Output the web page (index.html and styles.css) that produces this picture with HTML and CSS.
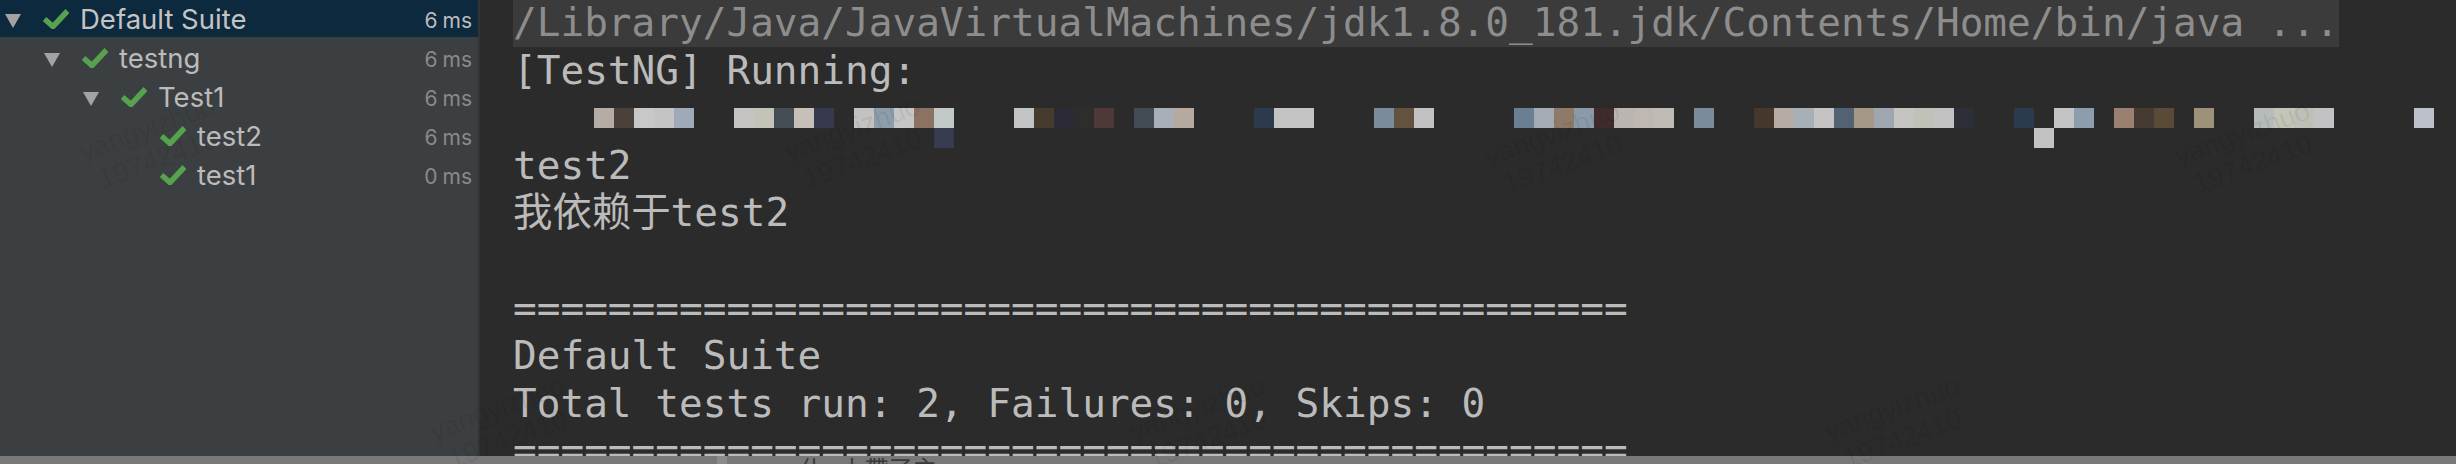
FILE: index.html
```html
<!DOCTYPE html>
<html lang="zh-CN">
<head>
    <meta charset="UTF-8">
    <title>TestNG Run</title>
    <link rel="stylesheet" href="styles.css">
</head>
<body>
    <div class="window">
        <div class="main">
            <aside class="tree">
                <div class="tree-list">
                    <div class="node selected lvl0">
                        <span class="toggle"><svg viewBox="0 0 16 14"><polygon points="0,0 16,0 8,14"/></svg></span>
                        <span class="check"><svg viewBox="0 0 26 20"><path d="M1.5 10 L10 17.5 L24.5 2"/></svg></span>
                        <span class="name">Default Suite</span>
                        <span class="time">6 ms</span>
                    </div>
                    <div class="node lvl1">
                        <span class="toggle"><svg viewBox="0 0 16 14"><polygon points="0,0 16,0 8,14"/></svg></span>
                        <span class="check"><svg viewBox="0 0 26 20"><path d="M1.5 10 L10 17.5 L24.5 2"/></svg></span>
                        <span class="name">testng</span>
                        <span class="time">6 ms</span>
                    </div>
                    <div class="node lvl2">
                        <span class="toggle"><svg viewBox="0 0 16 14"><polygon points="0,0 16,0 8,14"/></svg></span>
                        <span class="check"><svg viewBox="0 0 26 20"><path d="M1.5 10 L10 17.5 L24.5 2"/></svg></span>
                        <span class="name">Test1</span>
                        <span class="time">6 ms</span>
                    </div>
                    <div class="node lvl3">
                        <span class="toggle"></span>
                        <span class="check"><svg viewBox="0 0 26 20"><path d="M1.5 10 L10 17.5 L24.5 2"/></svg></span>
                        <span class="name">test2</span>
                        <span class="time">6 ms</span>
                    </div>
                    <div class="node lvl3">
                        <span class="toggle"></span>
                        <span class="check"><svg viewBox="0 0 26 20"><path d="M1.5 10 L10 17.5 L24.5 2"/></svg></span>
                        <span class="name">test1</span>
                        <span class="time">0 ms</span>
                    </div>
                </div>
            </aside>

            <section class="console">
                <div class="lines">
                    <div class="line"><span class="cmd">/Library/Java/JavaVirtualMachines/jdk1.8.0_181.jdk/Contents/Home/bin/java ...</span></div>
                    <div class="line">[TestNG] Running:</div>
                    <div class="line"><div class="mosaic" id="mosaic"></div></div>
                    <div class="line">test2</div>
                    <div class="line">我依赖于test2</div>
                    <div class="line"></div>
                    <div class="line">===============================================</div>
                    <div class="line">Default Suite</div>
                    <div class="line">Total tests run: 2, Failures: 0, Skips: 0</div>
                    <div class="line">===============================================</div>
                </div>
            </section>
        </div>

        <div class="statusbar">
            <span class="sb-grip"></span>
            <span class="sb-text">仆 <i class="sb-dot"></i> 上帶了主</span>
        </div>

        <div class="watermark wm1">yangyizhuo<br>&nbsp;19742410</div>
        <div class="watermark wm2">yangyizhuo<br>&nbsp;19742410</div>
        <div class="watermark wm3">yangyizhuo<br>&nbsp;19742410</div>
        <div class="watermark wm4">yangyizhuo<br>&nbsp;19742410</div>
        <div class="watermark wm5">yangyizhuo<br>&nbsp;19742410</div>
        <div class="watermark wm6">yangyizhuo<br>&nbsp;19742410</div>
        <div class="watermark wm7">yangyizhuo<br>&nbsp;19742410</div>
    </div>

    <script>
        // blurred-out path, one colour per 20px cell ("" = empty)
        const linha1 = [
            "#b5aca5", "#4a413b", "#c8c8c8", "#c4c4c4", "#9eaab8", "", "",
            "#c5c4c0", "#c3c3b8", "#444c54", "#c6c0b8", "#373a4f", "",
            "#c2c2c2", "#8d9daa", "#c6c6c6", "#8c7262", "#c2cac8", "", "", "",
            "#c1c3c5", "#473b2e", "#2b2a35", "#2d2d2e", "#4e3838", "",
            "#434c54", "#a8afb7", "#b6aaa0", "", "", "",
            "#2d3a4d", "#c4c4c4", "#c4c4c4", "", "", "",
            "#7a8c9c", "#62523f", "#c2c2c2", "", "", "", "",
            "#6a7f93", "#a5abb2", "#8e7a68", "#8a9aa8", "#3f2b2c", "#bab5b0", "#bfb7b1", "#c0bcb5", "",
            "#7a8c9b", "", "",
            "#45372b", "#b5aca3", "#a6b0b6", "#c4c4c4", "#536272", "#a69886", "#9ea6b0", "#c4c4c2", "#c0c1b8", "#c2c2c2", "#2c2f38", "", "",
            "#2c3a50", "", "#c4c4c4", "#8c9dad", "",
            "#9a8070", "#463b33", "#5c4a38", "",
            "#9d917a", "", "",
            "#b7bcbb", "#c5c4b8", "#bec0b8", "#c2c2c4", "", "", "", "",
            "#bcc0c8"
        ];
        const linha2 = { 17: "#363b50", 72: "#c2c2c2" };

        const mosaic = document.getElementById("mosaic");
        linha1.forEach(function (cor) {
            const cell = document.createElement("span");
            cell.className = "cell";
            if (cor) cell.style.background = cor;
            mosaic.appendChild(cell);
        });
        Object.keys(linha2).forEach(function (col) {
            const cell = document.createElement("span");
            cell.className = "cell";
            cell.style.gridColumn = (Number(col) + 1);
            cell.style.gridRow = 2;
            cell.style.background = linha2[col];
            mosaic.appendChild(cell);
        });
    </script>
</body>
</html>
```

FILE: styles.css
```css
body {
    margin: 0;
    padding: 0;
    background: #2b2b2b;
    font-family: Inter, "Liberation Sans", sans-serif;
    overflow: hidden;
}

.window {
    position: relative;
    width: 2456px;
    height: 464px;
    display: flex;
    flex-direction: column;
    overflow: hidden;
}

.main {
    display: flex;
    height: 456px;
    overflow: hidden;
}

/* test tree on the left */
.tree {
    width: 478px;
    flex: none;
    background: #3c3f41;
    border-right: 2px solid #313335;
}

.tree-list {
    margin-top: -2px;
}

.node {
    display: flex;
    align-items: center;
    height: 39px;
    padding-right: 6px;
}

.node.selected {
    background: #0d293e;
}

.lvl0 { padding-left: 5px; }
.lvl1 { padding-left: 44px; }
.lvl2 { padding-left: 83px; }
.lvl3 { padding-left: 122px; }

.toggle {
    width: 38px;
    flex: none;
    display: flex;
    padding-top: 6px;
}

.toggle svg {
    width: 16px;
    height: 14px;
    fill: #a3a3a3;
}

.check {
    width: 37px;
    flex: none;
    display: flex;
    padding-top: 2px;
}

.check svg {
    width: 26px;
    height: 20px;
    fill: none;
    stroke: #57a24d;
    stroke-width: 5.5;
}

.name {
    flex: 1;
    font-size: 27.5px;
    color: #bbbbbb;
    padding-top: 3px;
    white-space: nowrap;
}

.node.selected .name {
    color: #c4c4c4;
}

.time {
    font-size: 21px;
    color: #8a8a8a;
    padding-top: 6px;
    word-spacing: -1px;
}

.node.selected .time {
    color: #bdbdbd;
}

/* console output */
.console {
    flex: 1;
    background: #2b2b2b;
    padding-left: 33px;
    font-family: "DejaVu Sans Mono", "Noto Sans CJK SC", monospace;
    font-size: 39.4px;
    color: #bbbbbb;
}

.lines {
    margin-top: -1px;
}

.line {
    height: 47.6px;
    line-height: 47.6px;
    white-space: pre;
}

.cmd {
    display: inline-block;
    height: 47.6px;
    background: #3b3b3b;
    color: #8d8d8d;
}

.mosaic {
    display: grid;
    grid-template-columns: repeat(92, 20px);
    grid-auto-rows: 20px;
    margin-left: 81px;
    padding-top: 14px;
}

.cell {
    display: block;
}

/* bottom strip, mostly cut off */
.statusbar {
    height: 8px;
    background: #787878;
    display: flex;
    overflow: hidden;
}

.sb-grip {
    width: 10px;
    margin-left: 717px;
    background: #8b8b8b;
}

.sb-text {
    margin-left: 73px;
    font-family: "Noto Sans CJK SC", sans-serif;
    font-size: 24px;
    line-height: 24px;
    color: #3a3a3a;
    white-space: nowrap;
}

.sb-dot {
    display: inline-block;
    width: 6px;
    height: 6px;
    background: #3f6f9e;
}

/* faint watermark over the picture */
.watermark {
    position: absolute;
    font-family: "Liberation Sans", sans-serif;
    font-size: 28px;
    line-height: 32px;
    color: rgba(0, 0, 0, 0.07);
    transform: rotate(-20deg);
    pointer-events: none;
    white-space: nowrap;
}

.wm1 { left: 82px; top: 112px; }
.wm2 { left: 432px; top: 392px; }
.wm3 { left: 787px; top: 112px; }
.wm4 { left: 1132px; top: 392px; }
.wm5 { left: 1487px; top: 117px; }
.wm6 { left: 1827px; top: 392px; }
.wm7 { left: 2177px; top: 117px; }
```
